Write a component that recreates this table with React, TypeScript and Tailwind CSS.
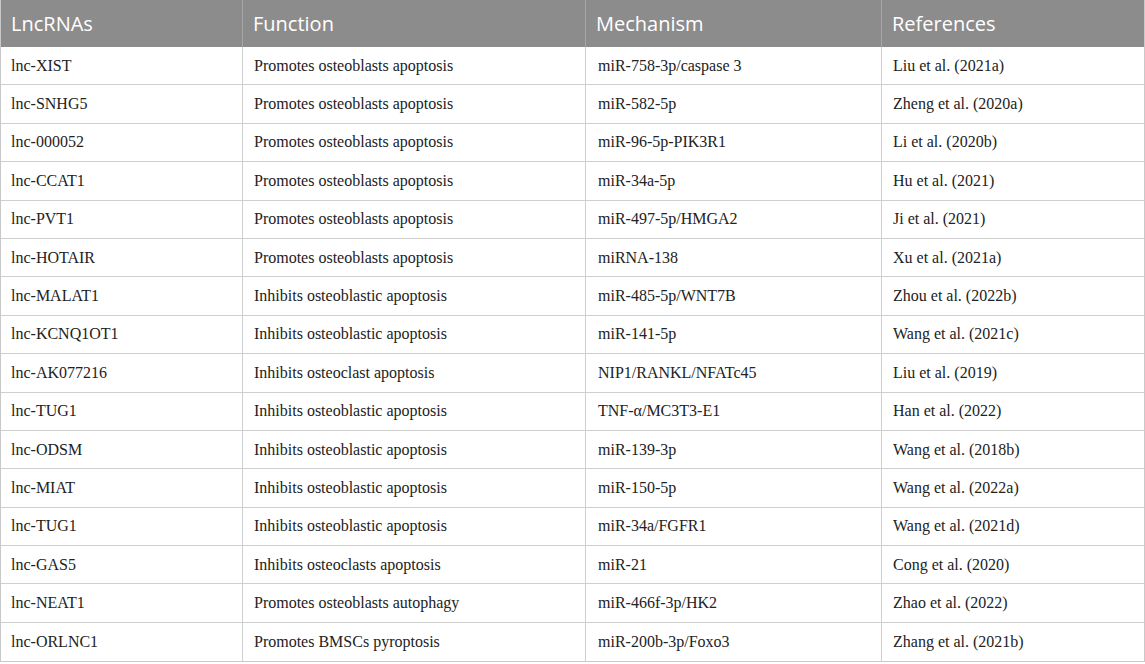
import React from 'react';

interface Row {
  lnc: string;
  fn: string;
  mech: string;
  ref: string;
}

const rows: Row[] = [
  { lnc: 'lnc-XIST', fn: 'Promotes osteoblasts apoptosis', mech: 'miR-758-3p/caspase 3', ref: 'Liu et al. (2021a)' },
  { lnc: 'lnc-SNHG5', fn: 'Promotes osteoblasts apoptosis', mech: 'miR-582-5p', ref: 'Zheng et al. (2020a)' },
  { lnc: 'lnc-000052', fn: 'Promotes osteoblasts apoptosis', mech: 'miR-96-5p-PIK3R1', ref: 'Li et al. (2020b)' },
  { lnc: 'lnc-CCAT1', fn: 'Promotes osteoblasts apoptosis', mech: 'miR-34a-5p', ref: 'Hu et al. (2021)' },
  { lnc: 'lnc-PVT1', fn: 'Promotes osteoblasts apoptosis', mech: 'miR-497-5p/HMGA2', ref: 'Ji et al. (2021)' },
  { lnc: 'lnc-HOTAIR', fn: 'Promotes osteoblasts apoptosis', mech: 'miRNA-138', ref: 'Xu et al. (2021a)' },
  { lnc: 'lnc-MALAT1', fn: 'Inhibits osteoblastic apoptosis', mech: 'miR-485-5p/WNT7B', ref: 'Zhou et al. (2022b)' },
  { lnc: 'lnc-KCNQ1OT1', fn: 'Inhibits osteoblastic apoptosis', mech: 'miR-141-5p', ref: 'Wang et al. (2021c)' },
  { lnc: 'lnc-AK077216', fn: 'Inhibits osteoclast apoptosis', mech: 'NIP1/RANKL/NFATc45', ref: 'Liu et al. (2019)' },
  { lnc: 'lnc-TUG1', fn: 'Inhibits osteoblastic apoptosis', mech: 'TNF-α/MC3T3-E1', ref: 'Han et al. (2022)' },
  { lnc: 'lnc-ODSM', fn: 'Inhibits osteoblastic apoptosis', mech: 'miR-139-3p', ref: 'Wang et al. (2018b)' },
  { lnc: 'lnc-MIAT', fn: 'Inhibits osteoblastic apoptosis', mech: 'miR-150-5p', ref: 'Wang et al. (2022a)' },
  { lnc: 'lnc-TUG1', fn: 'Inhibits osteoblastic apoptosis', mech: 'miR-34a/FGFR1', ref: 'Wang et al. (2021d)' },
  { lnc: 'lnc-GAS5', fn: 'Inhibits osteoclasts apoptosis', mech: 'miR-21', ref: 'Cong et al. (2020)' },
  { lnc: 'lnc-NEAT1', fn: 'Promotes osteoblasts autophagy', mech: 'miR-466f-3p/HK2', ref: 'Zhao et al. (2022)' },
  { lnc: 'lnc-ORLNC1', fn: 'Promotes BMSCs pyroptosis', mech: 'miR-200b-3p/Foxo3', ref: 'Zhang et al. (2021b)' },
];

const headers = ['LncRNAs', 'Function', 'Mechanism', 'References'];

export default function App() {
  return (
    <div className="w-[1145px] h-[664px] bg-white overflow-hidden">
      <div className="border-l border-r border-b border-[#c9c9c9]">
        {/* Header */}
        <div className="grid grid-cols-[242px_343px_296px_1fr] h-[47px] bg-[#8c8c8c] font-['Open_Sans',sans-serif] text-[20px] text-white">
          {headers.map((h, i) => (
            <div
              key={h}
              className={`flex items-center pl-[10px] ${i < 3 ? 'border-r border-[#a6a6a6]' : ''}`}
            >
              {h}
            </div>
          ))}
        </div>

        {/* Body */}
        {rows.map((r, i) => (
          <div
            key={i}
            className={`grid grid-cols-[242px_343px_296px_1fr] h-[38.4px] font-['Liberation_Serif',serif] text-[16px] text-[#222] ${
              i < rows.length - 1 ? 'border-b border-[#cfcfcf]' : ''
            }`}
          >
            <div className="flex items-center pl-[10px] border-r border-[#cfcfcf]">{r.lnc}</div>
            <div className="flex items-center pl-[11px] border-r border-[#cfcfcf]">{r.fn}</div>
            <div className="flex items-center pl-[12px] border-r border-[#cfcfcf]">{r.mech}</div>
            <div className="flex items-center pl-[11px]">{r.ref}</div>
          </div>
        ))}
      </div>
    </div>
  );
}
